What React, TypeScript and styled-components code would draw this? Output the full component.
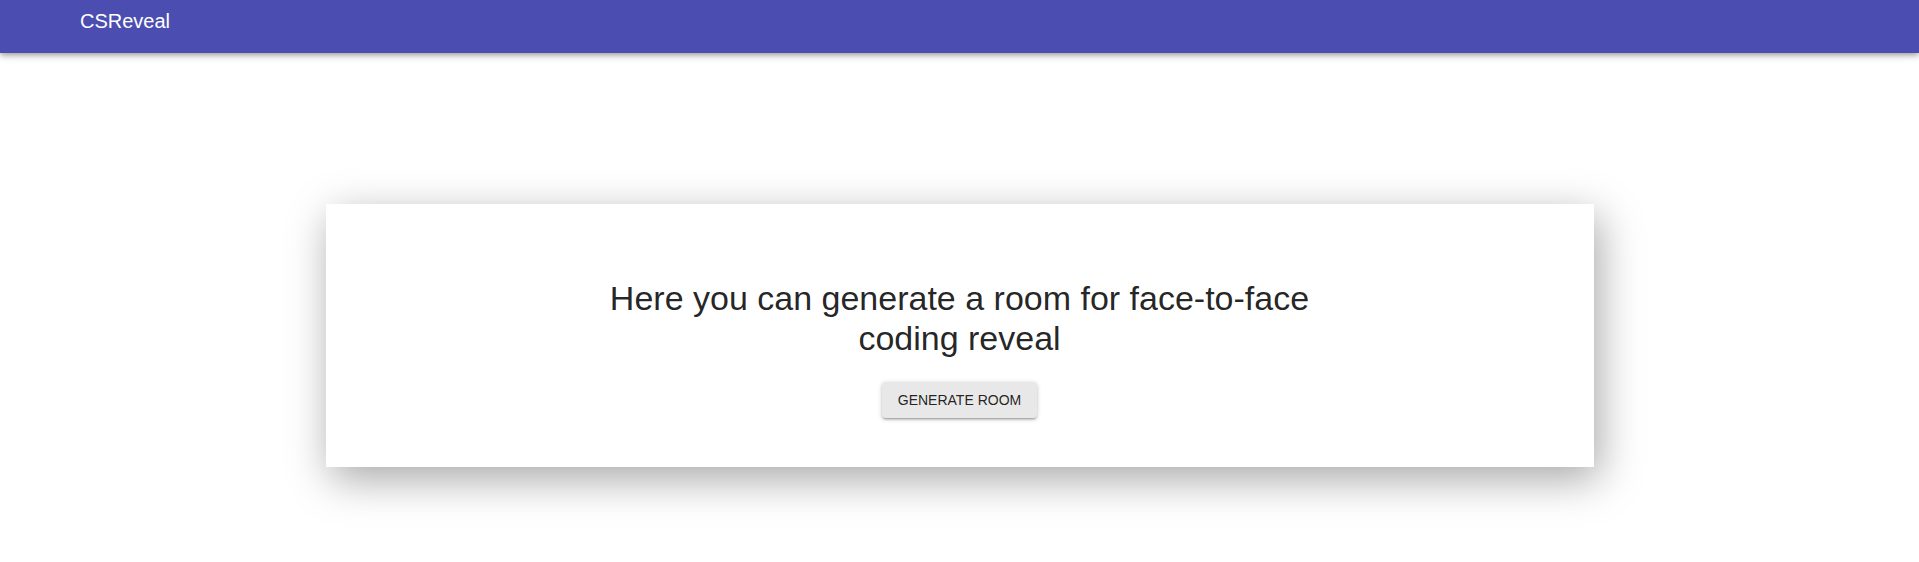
import React from "react";
import styled, { createGlobalStyle } from "styled-components";

const GlobalStyle = createGlobalStyle`
  html, body {
    margin: 0;
    padding: 0;
    background: #ffffff;
    font-family: "Liberation Sans", Arial, sans-serif;
  }
`;

const Page = styled.div`
  min-height: 562px;
  display: flex;
  flex-direction: column;
`;

const AppBar = styled.header`
  height: 53px;
  box-sizing: border-box;
  padding: 10px 0 0 80px;
  background: #4b4db0;
  color: #ffffff;
  box-shadow: 0px 2px 4px -1px rgba(0, 0, 0, 0.2),
    0px 4px 5px 0px rgba(0, 0, 0, 0.14), 0px 1px 10px 0px rgba(0, 0, 0, 0.12);
  position: relative;
  z-index: 1;
`;

const Brand = styled.div`
  font-size: 20px;
  line-height: 23px;
  font-weight: 400;
`;

const Main = styled.main`
  display: flex;
  justify-content: center;
  padding-top: 151px;
`;

const Card = styled.section`
  width: 1268px;
  box-sizing: border-box;
  background: #ffffff;
  padding: 74px 24px 49px;
  display: flex;
  flex-direction: column;
  align-items: center;
  gap: 24px;
  box-shadow: 5px 12px 40px rgba(0, 0, 0, 0.35);
`;

const Heading = styled.h1`
  margin: 0;
  width: 740px;
  text-align: center;
  font-size: 34px;
  line-height: 40px;
  font-weight: 400;
  color: rgba(0, 0, 0, 0.87);
`;

const Button = styled.button`
  height: 36px;
  padding: 0 16px;
  border: none;
  border-radius: 4px;
  background: #e8e8e8;
  color: rgba(0, 0, 0, 0.87);
  font-family: "Liberation Sans", Arial, sans-serif;
  font-size: 14px;
  font-weight: 400;
  text-transform: uppercase;
  cursor: pointer;
  box-shadow: 0 1px 5px 0 rgba(0, 0, 0, 0.2), 0 2px 2px 0 rgba(0, 0, 0, 0.14),
    0 3px 1px -2px rgba(0, 0, 0, 0.12);
`;

export default function App() {
  return (
    <Page>
      <GlobalStyle />
      <AppBar>
        <Brand>CSReveal</Brand>
      </AppBar>
      <Main>
        <Card>
          <Heading>
            Here you can generate a room for face-to-face coding reveal
          </Heading>
          <Button>Generate Room</Button>
        </Card>
      </Main>
    </Page>
  );
}
